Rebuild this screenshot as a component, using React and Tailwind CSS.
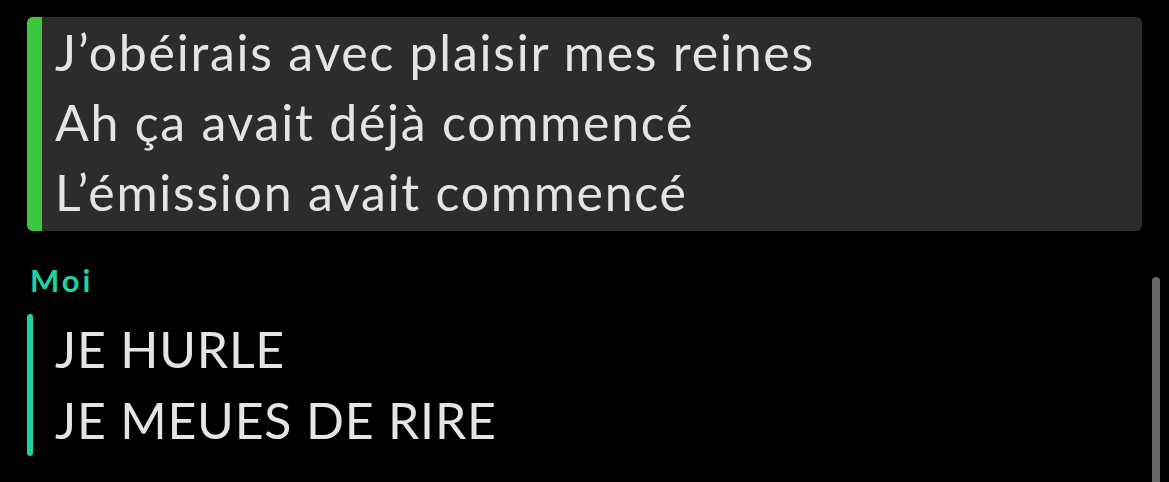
import React from "react";

const quoted = [
  "J’obéirais avec plaisir mes reines",
  "Ah ça avait déjà commencé",
  "L’émission avait commencé",
];

const mine = ["JE HURLE", "JE MEUES DE RIRE"];

export default function App() {
  return (
    <div className="relative h-[482px] w-[1169px] overflow-hidden bg-black font-['Lato',sans-serif]">
      <div className="pl-[27px] pr-[27px] pt-[17px]">
        {/* message cité */}
        <div className="flex overflow-hidden rounded-[6px] bg-[#2c2c2c]">
          <div className="w-[15px] shrink-0 bg-[#3cc83c]" />
          <div className="pb-[4px] pl-[13px]">
            {quoted.map((line) => (
              <div key={line} className="text-[50px] leading-[70px] tracking-[1.75px] text-[#e4e4e4]">
                {line}
              </div>
            ))}
          </div>
        </div>

        {/* auteur */}
        <div className="mt-[33px] pl-[3px] text-[31px] font-bold leading-[32px] tracking-[3px] text-[#1ed3a3]">
          Moi
        </div>

        {/* réponse */}
        <div className="mt-[18px] flex">
          <div className="w-[6px] shrink-0 rounded-full bg-[#1ed3a3]" />
          <div className="pl-[22px]">
            {mine.map((line) => (
              <div key={line} className="text-[50px] leading-[71px] tracking-[0.8px] text-[#e4e4e4]">
                {line}
              </div>
            ))}
          </div>
        </div>
      </div>

      {/* barre de défilement */}
      <div className="absolute left-[1152px] top-[277px] h-[220px] w-[8px] rounded-full bg-[#666666]" />
    </div>
  );
}
